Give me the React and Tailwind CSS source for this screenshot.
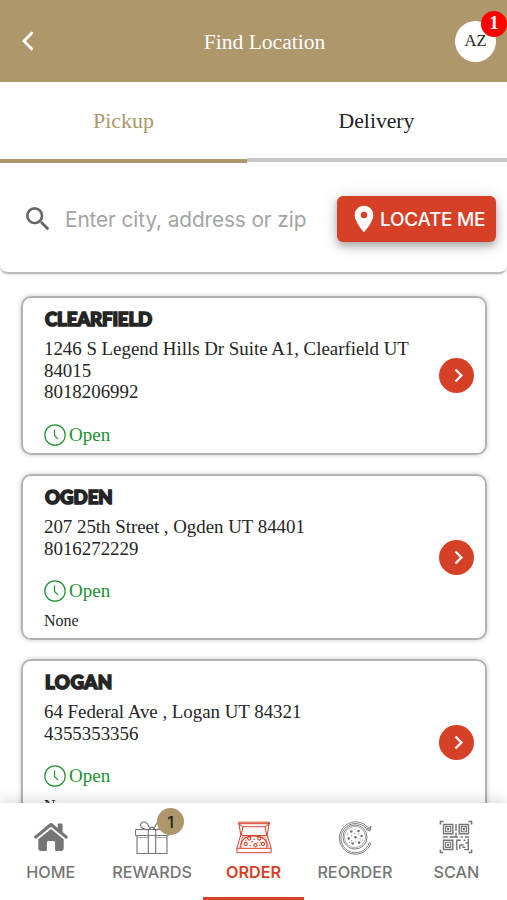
import { clsx } from 'clsx';
import { MdChevronRight, MdLocationOn, MdSearch } from 'react-icons/md';

const locations = [
  {
    name: 'Clearfield',
    address: '1246 S Legend Hills Dr Suite A1, Clearfield UT 84015',
    phone: '8018206992',
    height: 'h-[159px]',
    tracking: 'tracking-[-0.15px]',
  },
  {
    name: 'Ogden',
    address: '207 25th Street , Ogden UT 84401',
    phone: '8016272229',
    note: 'None',
    height: 'h-[166px]',
    tracking: 'tracking-[0px]',
  },
  {
    name: 'Logan',
    address: '64 Federal Ave , Logan UT 84321',
    phone: '4355353356',
    note: 'None',
    height: 'h-[166px]',
    tracking: 'tracking-[0.5px]',
  },
];

function ClockIcon() {
  return (
    <svg className="h-[22px] w-[22px]" viewBox="0 0 22 22" fill="none" stroke="currentColor">
      <circle cx="11" cy="11" r="10.2" strokeWidth="1.2" />
      <path d="M10.5 5.5v6l3.6 3.6" strokeWidth="1.2" />
    </svg>
  );
}

function HomeIcon() {
  return (
    <svg className="h-9 w-9" viewBox="0 0 36 36">
      <path
        fill="currentColor"
        d="M1.4 17.2 16.2 4.7q1.8-1.4 3.6 0l4.9 4.2V5.2q0-.8.8-.8h3.3q.8 0 .8.8v7.9l4.9 4.1q.8.8.1 1.5l-.7.8q-.7.6-1.4 0L18.8 8.3q-.8-.6-1.6 0L3.5 19.5q-.7.6-1.4 0l-.8-.9q-.6-.7.1-1.4ZM5.3 20.3 18 9.9l12.7 10.4v9.3q0 2.4-2.4 2.4h-5.2q-1 0-1-1v-7.3q0-1.6-1.6-1.6h-5q-1.6 0-1.6 1.6V31q0 1-1 1H7.7q-2.4 0-2.4-2.4Z"
      />
    </svg>
  );
}

function GiftIcon() {
  return (
    <svg className="h-9 w-9" viewBox="0 0 36 36" fill="none" stroke="currentColor" strokeWidth="1.1">
      <rect x="1.5" y="10.5" width="33" height="6" rx=".5" />
      <path d="M3 16.5V34.5h30v-18M14.3 10.5v24M21.7 10.5v24" />
      <path d="M3 18.5h11.3m7.4 0H33" strokeWidth=".6" />
      <path d="M15.5 10.5C12.5 11 8 10 6.8 7.5 5.6 4 9 1.5 12 3.5c2 1.3 3.2 4 3.8 7M20.5 10.5c3 .5 7.5-.5 8.7-3 1.2-3.5-2.2-6-5.2-4-2 1.3-3.2 4-3.8 7M15.5 10.5c1-3.2 4-3.2 5 0" />
    </svg>
  );
}

function PizzaBoxIcon() {
  return (
    <svg className="h-9 w-9" viewBox="0 0 36 36" fill="none" stroke="currentColor" strokeWidth="1" strokeLinejoin="round">
      <path d="M2.7 3.2h30.6M2.7 3.2 4.8 16 .9 29v4.7h34.2V29l-3.9-13 2.1-12.8v1.5H2.7l4.2 3-1.6 8.8h25.4l-1.6-8.8H6.9M29.1 7.7l4.2-3M.9 29.3h34.2" />
      <path d="M5 29C4.2 22.5 8 18.7 13.2 17.4c3.2-.7 6.4-.7 9.6 0C28 18.7 31.8 22.5 31 29" strokeWidth="1.1" />
      <path d="M3.7 28.4 6.4 18h4.2M32.3 28.4 29.6 18h-4.2" strokeWidth=".6" />
      <g strokeWidth="1.1">
        <circle cx="13.2" cy="19.5" r="1.6" />
        <circle cx="23.3" cy="19.5" r="1.6" />
        <circle cx="9.7" cy="25" r="1.6" />
        <circle cx="19.4" cy="26.2" r="1.6" />
        <circle cx="27" cy="25" r="1.6" />
        <path d="m17.6 19.8.9 1.2m-3.3 2 1.8-.4m4 .3 1 .7m2.2.1 1.1-.7M13.6 25.8l1 1m8.7-.8.9.8M10.4 21.5l-.9.5" />
      </g>
    </svg>
  );
}

function ReorderIcon() {
  return (
    <svg className="h-9 w-9" viewBox="0 0 36 36" fill="none" stroke="currentColor" strokeWidth=".9">
      <path d="M30.6 8.2A16.2 16.2 0 1 0 33.8 24.5l-1.5-.7A14.6 14.6 0 1 1 29.3 9.4" />
      <path d="m29.3 10.6 3.8 1.2 1-4.6Z" fill="currentColor" fillOpacity=".5" />
      <circle cx="18" cy="18" r="12" />
      <circle cx="18" cy="18" r="10.6" strokeWidth=".6" />
      <g fill="currentColor" stroke="none">
        <circle cx="14.3" cy="12.6" r="1.3" />
        <circle cx="21.5" cy="12" r="1.3" />
        <circle cx="24.6" cy="17" r="1.3" />
        <circle cx="18.5" cy="18.3" r="1.3" />
        <circle cx="11.7" cy="19.4" r="1.3" />
        <circle cx="15.6" cy="24.5" r="1.3" />
        <circle cx="22" cy="23.6" r="1.3" />
      </g>
      <path d="m17 14 1.2 1m3.2.2 1-.7M10 15l1.4.6m3.4.4-.5 1.2m8 2.3 1.2.7m-9.5 1.2 1 .8m4 .2-.7 1M18 9.5v1M12 23l.8.8M25 21l.8.3" strokeWidth=".9" />
    </svg>
  );
}

function QrIcon() {
  return (
    <svg className="h-9 w-9" viewBox="0 0 36 36" fill="none" stroke="currentColor" strokeWidth="1.1">
      <path d="M2.4 5.5V2.4h3.1M30.5 2.4h3.1v3.1M2.4 30.5v3.1h3.1M30.5 33.6h3.1v-3.1" strokeWidth="1.5" />
      <path d="M5.5 5.5h9.3v9.3H5.5ZM21.2 5.5h9.3v9.3h-9.3ZM5.5 21.2h9.3v9.3H5.5Z" strokeWidth="1.4" />
      <path d="M7.6 7.6h5.1v5.1H7.6ZM23.3 7.6h5.1v5.1h-5.1ZM7.6 23.3h5.1v5.1H7.6Z" />
      <path d="M9.6 9.6h1.1v1.1H9.6ZM25.3 9.6h1.1v1.1h-1.1ZM9.6 25.3h1.1v1.1H9.6Z" />
      <path d="M18 5v7M18 13.7v4.1M4.8 18h5M11.5 18H20M22.5 18H25M27 18h4M18.8 31v-9.8h4M25.5 21.2h2M30.3 20v10.6h-4.1M21.7 30v-4M21.7 26h4M27.5 24h2.8M24.3 28.3h3" strokeWidth="1.4" />
    </svg>
  );
}

const navItems = [
  { label: 'Home', icon: HomeIcon },
  { label: 'Rewards', icon: GiftIcon, badge: 1 },
  { label: 'Order', icon: PizzaBoxIcon, active: true },
  { label: 'Reorder', icon: ReorderIcon },
  { label: 'Scan', icon: QrIcon },
];

function Header() {
  return (
    <header className="flex h-[82px] shrink-0 items-center justify-between bg-[#ad976b] pl-[21px] pr-[11px]">
      <button className="w-[53px] text-white" aria-label="Back">
        <svg className="h-5 w-3.5" viewBox="0 0 14 20" fill="none" stroke="currentColor" strokeWidth="2.8" strokeLinecap="round">
          <path d="M10.8 2 3 10l7.8 8" />
        </svg>
      </button>
      <h1 className="pt-[2px] text-[21.6px] text-white">Find Location</h1>
      <div className="relative flex h-[41px] w-[41px] items-center justify-center rounded-full bg-white pt-px text-[16.5px] text-[#222]">
        AZ
        <span className="absolute -right-[11px] -top-[10px] flex h-[26px] w-[26px] items-center justify-center rounded-full bg-[#ff0000] text-[19px] font-bold text-white">
          1
        </span>
      </div>
    </header>
  );
}

function Tabs() {
  return (
    <div className="flex h-[81px] shrink-0 text-[22px]">
      <button className="w-[247px] border-b-4 border-[#ad976b] pb-px text-[#ad976b]">Pickup</button>
      <button className="mb-px flex-1 border-b-4 border-[#c6c6c6] pt-[2px] pr-px text-[21.7px] text-[#222]">
        Delivery
      </button>
    </div>
  );
}

function SearchBar() {
  return (
    <div className="flex h-[111px] shrink-0 items-center rounded-b-lg border-b-2 border-[#bdbdbd] pt-[3px] pl-[22px] pr-[11px] font-[Inter,sans-serif] shadow-[0_1px_2px_rgba(0,0,0,0.12)]">
      <MdSearch className="h-8 w-8 text-[#666]" />
      <input
        className="ml-[11px] w-[250px] pt-[2px] text-[20.8px] tracking-[-0.1px] outline-none placeholder:text-[#a4a4a4]"
        placeholder="Enter city, address or zip"
      />
      <button className="ml-auto flex h-[46px] w-[159px] items-center rounded-md bg-[#d64026] pl-[11px] text-[19px] font-medium tracking-[-0.3px] text-white shadow-[0_4px_8px_rgba(0,0,0,0.3),0_2px_20px_rgba(0,0,0,0.12)]">
        <MdLocationOn className="h-8 w-8 shrink-0" />
        <span className="pt-[2px] whitespace-nowrap">LOCATE ME</span>
      </button>
    </div>
  );
}

function LocationCard({ location }) {
  return (
    <div
      className={clsx(
        'flex shrink-0 items-center justify-between rounded-[10px] border-2 border-[#b3b3b3] pl-[21px] pr-[11px] shadow-[0_0_5px_rgba(0,0,0,0.22)]',
        location.height
      )}
    >
      <div className="h-full w-[380px] pt-[10px] text-[#252525]">
        <h2
          className={clsx(
            'pl-px font-[Lato,sans-serif] text-[18.6px] leading-[23px] font-black uppercase [-webkit-text-stroke:1.6px_#252525]',
            location.tracking
          )}
        >
          {location.name}
        </h2>
        <p className="mt-[7px] text-[18.9px] leading-[21.6px] tracking-[-0.02px]">{location.address}</p>
        <p className="text-[18.9px] leading-[21.6px]">{location.phone}</p>
        <p className="mt-[21px] flex items-center gap-[3px] text-[19px] leading-[22px] text-[#219131]">
          <ClockIcon />
          Open
        </p>
        {location.note && <p className="mt-2 text-[16px] leading-[21px]">{location.note}</p>}
      </div>
      <button
        className="flex h-[35px] w-[35px] items-center justify-center rounded-full bg-[#d64026] text-white"
        aria-label="Select location"
      >
        <MdChevronRight className="ml-[3px] h-[27px] w-[27px] shrink-0" />
      </button>
    </div>
  );
}

function BottomNav() {
  return (
    <nav className="relative z-10 flex h-[97px] shrink-0 bg-white font-[Inter,sans-serif] shadow-[0_-3px_12px_rgba(0,0,0,0.14)]">
      {navItems.map(({ label, icon: Icon, badge, active }) => (
        <a
          key={label}
          className={clsx(
            'flex flex-1 basis-0 flex-col items-center border-b-[3px] pt-4 text-[16.2px]',
            active ? 'border-[#d64026] font-semibold text-[#d64026]' : 'border-transparent font-medium text-[#757575]'
          )}
        >
          <span className="relative">
            <Icon />
            {badge && (
              <span className="absolute -right-[14px] -top-[11px] flex h-[27px] w-[27px] items-center justify-center rounded-full bg-[#ad976b] text-[16px] text-[#222]">
                {badge}
              </span>
            )}
          </span>
          <span className="mt-[5px] leading-[24px] uppercase">{label}</span>
        </a>
      ))}
    </nav>
  );
}

export default function App() {
  return (
    <div className="flex h-[900px] w-[507px] flex-col overflow-hidden bg-white font-['Liberation_Serif',serif]">
      <Header />
      <Tabs />
      <SearchBar />
      <main className="flex min-h-0 flex-1 flex-col gap-[19px] overflow-hidden pt-[22px] pr-[20px] pl-[21px]">
        {locations.map((location) => (
          <LocationCard key={location.name} location={location} />
        ))}
      </main>
      <BottomNav />
    </div>
  );
}
